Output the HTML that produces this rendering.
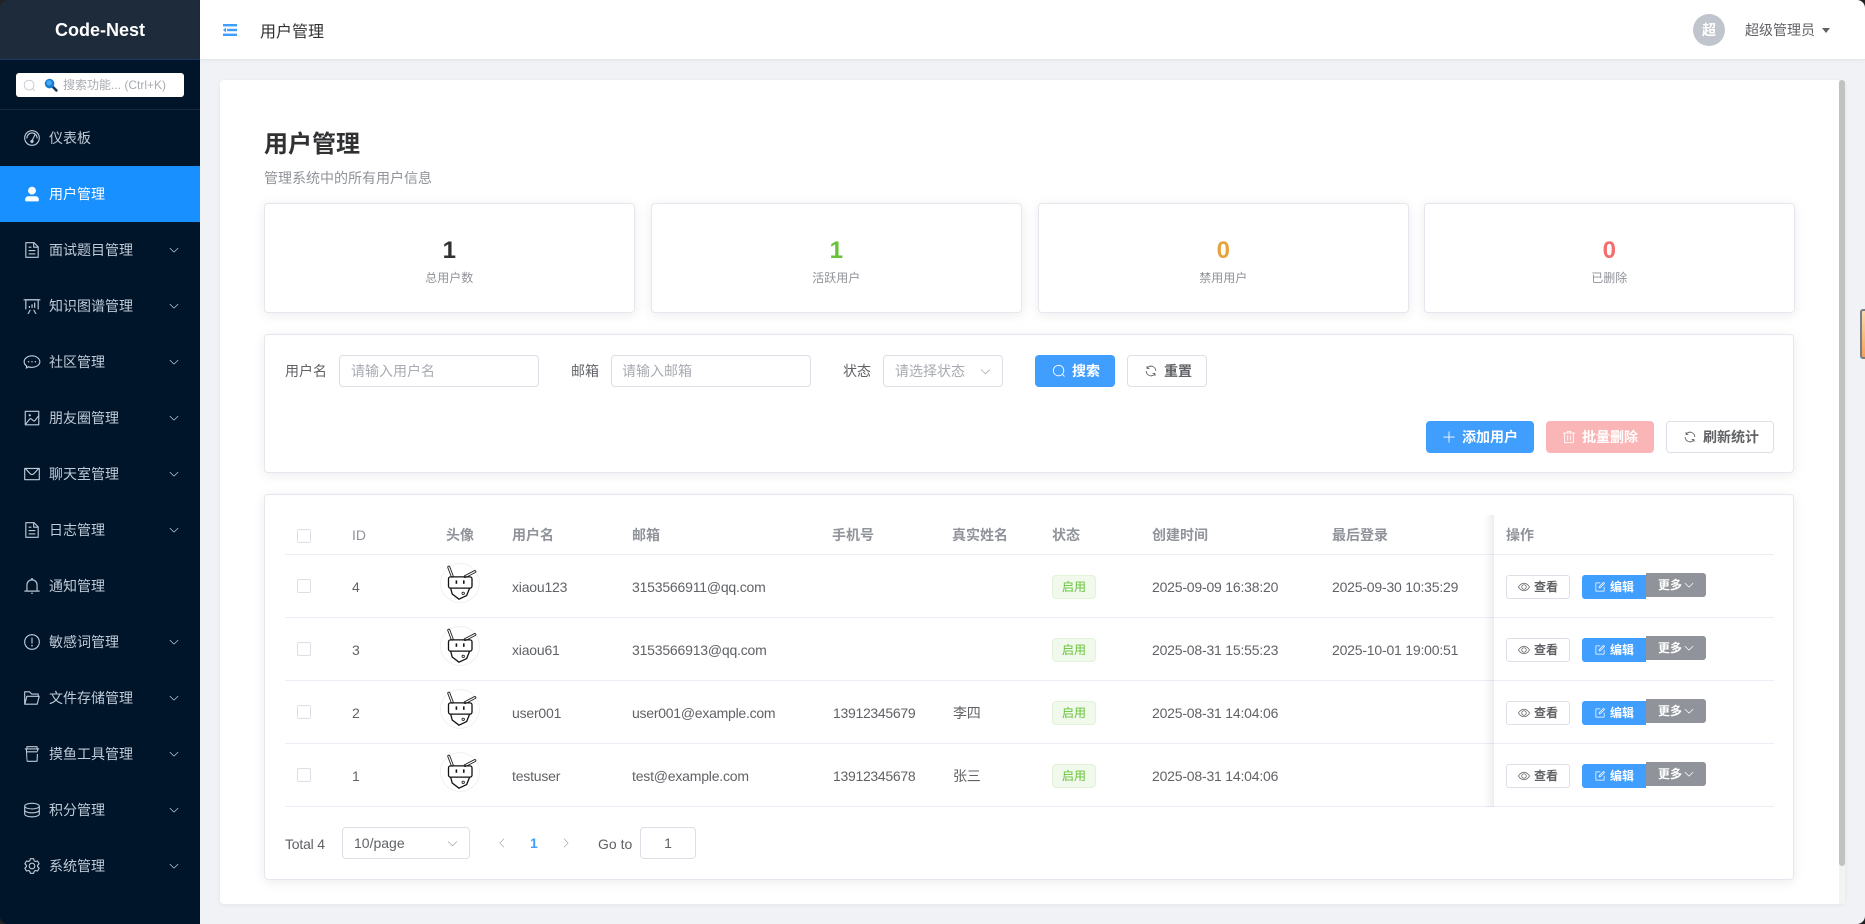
<!DOCTYPE html>
<html lang="zh-CN"><head><meta charset="utf-8"><title>用户管理</title>
<style>
*{box-sizing:border-box;margin:0;padding:0}
html,body{width:1865px;height:924px;overflow:hidden;background:#f0f2f5;font-family:"Liberation Sans","Noto Sans CJK SC",sans-serif;color:#606266;font-size:14px}
.a,.t,svg.i{position:absolute}
.t{white-space:nowrap;line-height:20px;height:20px}
svg.i{fill:currentColor;display:block}
#side{left:0;top:0;width:200px;height:924px;background:#001529}
#logo{left:0;top:0;width:200px;height:60px;background:#1d2b3a;border-bottom:1px solid #1c3a66;color:#fff;font-size:18px;font-weight:700;text-align:center;line-height:61px}
.m{position:absolute;left:0;width:200px;height:56px;color:#bfcbd9}
.m .t{left:49px;top:18px}
.m svg.ic{left:23px;top:19px;width:18px;height:18px}
.m svg.ch{left:168px;top:22px;width:12px;height:12px}
.on{background:#1890ff;color:#fff}
.card{position:absolute;background:#fff;border:1px solid #e4e7ed;border-radius:4px;box-shadow:0 2px 12px rgba(0,0,0,.08)}
.stat{top:203px;width:370.5px;height:110px;text-align:center}
.stat b{position:absolute;left:0;right:0;top:31px;font-size:24px;line-height:32px}
.stat span{position:absolute;left:0;right:0;top:64px;font-size:12px;line-height:20px;color:#909399}
.inp{position:absolute;top:355px;height:32px;border:1px solid #dcdfe6;border-radius:4px;background:#fff}
.ph{position:absolute;left:11px;top:5px;line-height:20px;color:#a8abb2;white-space:nowrap}
.btn{position:absolute;height:32px;border-radius:4px;line-height:30px;font-weight:700;white-space:nowrap}
.btn .t{top:6px;line-height:20px}
.pri{background:#409eff;color:#fff}
.dan{background:#fab6b6;color:#fff}
.pl{background:#fff;border:1px solid #dcdfe6;color:#606266}
.line{position:absolute;left:285px;width:1489px;height:1px;background:#ebeef5}
.th{top:525px;font-weight:700;color:#909399}
.cb{position:absolute;left:297px;width:14px;height:14px;border:1px solid #dcdfe6;border-radius:2px;background:#fff}
.row{position:absolute;left:0;width:1865px;height:62px}
.row .t{top:22px;letter-spacing:-.2px}
.av{position:absolute;left:440px;top:8px;width:40px;height:40px;border-radius:50%;background:#fff;border:1px solid #f1f1f1}
.av svg{position:absolute;left:-1px;top:-1px;width:40px;height:40px}
.tag{position:absolute;left:1052px;top:20px;width:44px;height:24px;line-height:22px;text-align:center;font-size:12px;color:#67c23a;background:#f0f9eb;border:1px solid #e1f3d8;border-radius:4px}
.view,.edit,.more{position:absolute;font-size:12px;white-space:nowrap;font-weight:700}
.view{left:1506px;top:20px;width:64px;height:24px;background:#fff;border:1px solid #dcdfe6;border-radius:3px;color:#606266}
.edit{left:1582px;top:20px;width:64px;height:24px;background:#409eff;color:#fff;border-radius:3px 0 0 3px}
.more{left:1646px;top:18px;width:60px;height:24px;background:#909399;color:#fff;border-radius:0 3px 3px 0}
.row .view .t{top:1px}
.row .edit .t,.row .more .t{top:2px;height:20px;letter-spacing:0}
.row .view .t{letter-spacing:0}
.row .ph{letter-spacing:-.3px}
</style></head><body>
<svg width="0" height="0" style="position:absolute"><defs>
<symbol id="search" viewBox="0 0 1024 1024"><path d="m795.904 750.72 124.992 124.928a32 32 0 0 1-45.248 45.248L750.656 795.904a416 416 0 1 1 45.248-45.248zM480 832a352 352 0 1 0 0-704 352 352 0 0 0 0 704z"/></symbol>
<symbol id="down" viewBox="0 0 1024 1024"><path d="M831.872 340.864 512 652.672 192.128 340.864a30.592 30.592 0 0 0-42.752 0 29.12 29.12 0 0 0 0 41.6L489.664 714.24a32 32 0 0 0 44.672 0l340.288-331.712a29.12 29.12 0 0 0 0-41.728 30.592 30.592 0 0 0-42.752 0z"/></symbol>
<symbol id="plus" viewBox="0 0 1024 1024"><path d="M480 480V128a32 32 0 0 1 64 0v352h352a32 32 0 1 1 0 64H544v352a32 32 0 1 1-64 0V544H128a32 32 0 0 1 0-64h352z"/></symbol>
<symbol id="del" viewBox="0 0 1024 1024"><path d="M160 256H96a32 32 0 0 1 0-64h256V95.936a32 32 0 0 1 32-32h256a32 32 0 0 1 32 32V192h256a32 32 0 1 1 0 64h-64v672a32 32 0 0 1-32 32H192a32 32 0 0 1-32-32V256zm448-64v-64H416v64h192zM224 896h576V256H224v640zm192-128a32 32 0 0 1-32-32V416a32 32 0 0 1 64 0v320a32 32 0 0 1-32 32zm192 0a32 32 0 0 1-32-32V416a32 32 0 0 1 64 0v320a32 32 0 0 1-32 32z"/></symbol>
<symbol id="refresh" viewBox="0 0 1024 1024"><path d="M771.776 794.88A384 384 0 0 1 128 512h64a320 320 0 0 0 555.712 216.448H654.72a32 32 0 1 1 0-64h149.056a32 32 0 0 1 32 32v148.928a32 32 0 1 1-64 0v-50.56zM276.288 295.616h92.992a32 32 0 0 1 0 64H220.16a32 32 0 0 1-32-32V178.56a32 32 0 0 1 64 0v50.56A384 384 0 0 1 896.128 512h-64a320 320 0 0 0-555.776-216.384z"/></symbol>
<symbol id="view" viewBox="0 0 1024 1024"><path d="M512 160c320 0 512 352 512 352S832 864 512 864 0 512 0 512s192-352 512-352zm0 64c-225.28 0-384.128 208.064-436.8 288 52.608 79.872 211.456 288 436.8 288 225.28 0 384.128-208.064 436.8-288-52.608-79.872-211.456-288-436.8-288zm0 64a224 224 0 1 1 0 448 224 224 0 0 1 0-448zm0 64a160.192 160.192 0 0 0-160 160c0 88.192 71.744 160 160 160s160-71.808 160-160-71.744-160-160-160z"/></symbol>
<symbol id="edit" viewBox="0 0 1024 1024"><path d="M832 512a32 32 0 1 1 64 0v352a32 32 0 0 1-32 32H160a32 32 0 0 1-32-32V160a32 32 0 0 1 32-32h352a32 32 0 0 1 0 64H192v640h640V512z"/><path d="m469.952 554.24 52.8-7.552L847.104 222.4a32 32 0 1 0-45.248-45.248L477.44 501.44l-7.552 52.8zm422.4-422.4a96 96 0 0 1 0 135.808l-331.84 331.84a32 32 0 0 1-18.112 9.088L436.8 623.68a32 32 0 0 1-36.224-36.224l15.104-105.6a32 32 0 0 1 9.024-18.112l331.904-331.84a96 96 0 0 1 135.744 0z"/></symbol>
<symbol id="odo" viewBox="0 0 1024 1024"><path d="M512 896a384 384 0 1 0 0-768 384 384 0 0 0 0 768zm0 64a448 448 0 1 1 0-896 448 448 0 0 1 0 896z"/><path d="M192 512a320 320 0 1 1 640 0 32 32 0 1 1-64 0 256 256 0 1 0-512 0 32 32 0 0 1-64 0z"/><path d="M570 628a96 96 0 1 1-61-20l152-320a32 32 0 1 1 58 27L570 628z"/></symbol>
<symbol id="user" viewBox="0 0 1024 1024"><path d="M288 320a224 224 0 1 0 448 0 224 224 0 1 0-448 0zm544 608H160a32 32 0 0 1-32-32v-96a160 160 0 0 1 160-160h448a160 160 0 0 1 160 160v96a32 32 0 0 1-32 32z"/></symbol>
<symbol id="doc" viewBox="0 0 1024 1024"><path d="M832 384H576V128H192v768h640V384zm-26.496-64L640 154.496V320h165.504zM160 64h480l256 256v608a32 32 0 0 1-32 32H160a32 32 0 0 1-32-32V96a32 32 0 0 1 32-32zm160 448h384v64H320v-64zm0-192h160v64H320v-64zm0 384h384v64H320v-64z"/></symbol>
<symbol id="board" viewBox="0 0 1024 1024"><path d="M32 128h960v64H32z"/><path d="M192 192v512h640V192H192zm-64-64h768v576H128V128z"/><path d="M322.176 960H248.32l144.64-250.56 55.424 32L322.176 960zm453.888 0h-73.856L576 741.44l55.424-32L776.064 960z"/><path d="M330 510h70v110h-70zM480 420h70v200h-70zM630 320h70v300h-70z"/></symbol>
<symbol id="chat" viewBox="0 0 1024 1024"><path d="M512 128C268 128 32 280 32 500c0 110 56 200 142 262l-22 142 170-82c58 18 124 28 190 28 244 0 480-150 480-350S756 128 512 128zm0 64c216 0 416 136 416 308S728 786 512 786c-62 0-122-10-176-30l-24-8-84 40 10-70-26-18c-76-52-116-124-116-200 0-172 200-308 416-308z"/><circle cx="320" cy="500" r="42"/><circle cx="512" cy="500" r="42"/><circle cx="704" cy="500" r="42"/></symbol>
<symbol id="pic" viewBox="0 0 1024 1024"><path d="M160 160v704h704V160H160zm-32-64h768a32 32 0 0 1 32 32v768a32 32 0 0 1-32 32H128a32 32 0 0 1-32-32V128a32 32 0 0 1 32-32z"/><path d="M384 288q64 0 64 64t-64 64q-64 0-64-64t64-64zM185.408 876.992l-50.816-38.912L350.72 556.032a96 96 0 0 1 134.592-17.856l1.856 1.472 122.88 99.136a32 32 0 0 0 44.992-4.864l216-269.888 49.92 39.936-215.808 269.824-.256.32a96 96 0 0 1-135.04 14.464l-122.88-99.072-.64-.512a32 32 0 0 0-44.8 5.952L185.408 876.992z"/></symbol>
<symbol id="msg" viewBox="0 0 1024 1024"><path d="M128 224v576h768V224H128zm-32-64h832a32 32 0 0 1 32 32v640a32 32 0 0 1-32 32H96a32 32 0 0 1-32-32V192a32 32 0 0 1 32-32z"/><path d="M904 224 656.512 506.88a192 192 0 0 1-289.024 0L120 224h784zm-698.944 0 210.56 240.704a128 128 0 0 0 192.704 0L818.944 224H205.056z"/></symbol>
<symbol id="bell" viewBox="0 0 1024 1024"><path d="M512 64a64 64 0 0 1 64 64v64H448v-64a64 64 0 0 1 64-64z"/><path d="M256 768h512V448a256 256 0 1 0-512 0v320zm256-640a320 320 0 0 1 320 320v384H192V448a320 320 0 0 1 320-320z"/><path d="M96 768h832q32 0 32 32t-32 32H96q-32 0-32-32t32-32zm352 128h128a64 64 0 0 1-128 0z"/></symbol>
<symbol id="warn" viewBox="0 0 1024 1024"><path d="M512 64a448 448 0 1 1 0 896 448 448 0 0 1 0-896zm0 832a384 384 0 0 0 0-768 384 384 0 0 0 0 768zm48-176a48 48 0 1 1-96 0 48 48 0 0 1 96 0zm-48-464a32 32 0 0 1 32 32v288a32 32 0 0 1-64 0V288a32 32 0 0 1 32-32z"/></symbol>
<symbol id="folder" viewBox="0 0 1024 1024"><path d="M878.08 448H241.92l-96 384h636.16l96-384zM832 384v-64H485.76L357.504 192H128v448l57.92-231.744A32 32 0 0 1 216.96 384H832zm-26.88 512H96a32 32 0 0 1-32-32V160a32 32 0 0 1 32-32h288l128 128h352a32 32 0 0 1 32 32v96h23.04a32 32 0 0 1 31.04 39.744l-112 448A32 32 0 0 1 805.12 896z"/></symbol>
<symbol id="cup" viewBox="0 0 1024 1024"><path d="M224 64h576a32 32 0 0 1 32 32v96h64a32 32 0 0 1 0 64h-32v96h-64v-96H224l30 640h516l18-384h64l-22 416a64 64 0 0 1-64 32H272a64 64 0 0 1-64-32l-48-672h-32a32 32 0 0 1 0-64h64V96a32 32 0 0 1 32-32zm32 64v64h512v-64H256zM200 352h624v64H200z"/></symbol>
<symbol id="coin" viewBox="0 0 1024 1024"><path d="M512 96C296 96 64 160 64 288v448c0 128 232 192 448 192s448-64 448-192V288C960 160 728 96 512 96zm0 64c204 0 384 60 384 128s-180 128-384 128-384-60-384-128 180-128 384-128zM128 392c76 54 240 88 384 88s308-34 384-88v120c0 68-180 128-384 128s-384-60-384-128V392zm0 224c76 54 240 88 384 88s308-34 384-88v120c0 68-180 128-384 128S128 804 128 736V616z"/></symbol>
<symbol id="gear" viewBox="0 0 1024 1024"><path d="M600.704 64a32 32 0 0 1 30.464 22.208l35.2 109.376c14.784 7.232 28.928 15.36 42.432 24.512l112.384-24.192a32 32 0 0 1 34.432 15.36L944.32 364.8a32 32 0 0 1-4.032 37.504l-77.12 85.12a357.12 357.12 0 0 1 0 49.024l77.12 85.248a32 32 0 0 1 4.032 37.504l-88.704 153.6a32 32 0 0 1-34.432 15.296L708.8 803.904c-13.44 9.088-27.648 17.28-42.368 24.512l-35.264 109.376A32 32 0 0 1 600.704 960H423.296a32 32 0 0 1-30.464-22.208L357.696 828.48a351.616 351.616 0 0 1-42.56-24.64l-112.32 24.256a32 32 0 0 1-34.432-15.36L79.68 659.2a32 32 0 0 1 4.032-37.504l77.12-85.248a357.12 357.12 0 0 1 0-48.896l-77.12-85.248A32 32 0 0 1 79.68 364.8l88.704-153.6a32 32 0 0 1 34.432-15.296l112.32 24.256c13.568-9.152 27.776-17.408 42.56-24.64l35.2-109.312A32 32 0 0 1 423.232 64H600.64zm-23.424 64H446.72l-36.352 113.088-24.512 11.968a294.113 294.113 0 0 0-34.816 20.096l-22.656 15.36-116.224-25.088-65.28 113.152 79.68 88.192-1.92 27.136a293.12 293.12 0 0 0 0 40.192l1.92 27.136-79.808 88.192 65.344 113.152 116.224-25.024 22.656 15.296a294.113 294.113 0 0 0 34.816 20.096l24.512 11.968L446.72 896h130.688l36.48-113.152 24.448-11.904a288.282 288.282 0 0 0 34.752-20.096l22.592-15.296 116.288 25.024 65.28-113.152-79.744-88.192 1.92-27.136a293.12 293.12 0 0 0 0-40.256l-1.92-27.136 79.808-88.128-65.344-113.152-116.288 24.96-22.592-15.232a287.616 287.616 0 0 0-34.752-20.096l-24.448-11.904L577.344 128zM512 320a192 192 0 1 1 0 384 192 192 0 0 1 0-384zm0 64a128 128 0 1 0 0 256 128 128 0 0 0 0-256z"/></symbol>
<symbol id="bot" viewBox="0 0 40 40"><g fill="none" stroke-linecap="round"><path d="M8.8 4.200 12.200 13.200M34.800 8.600 25.200 13.600" stroke="#222" stroke-width="3"/><path d="M8.800 4.200 12.200 13.200M34.800 8.600 25.200 13.600" stroke="#fff" stroke-width="1.200"/></g><g fill="none" stroke="#111" stroke-width="1.300" stroke-linejoin="round"><rect x="8.500" y="13.900" width="23.500" height="11.200" rx="2"/><path d="M10.700 25.300 12.200 31 19 36.200 26.600 32.600 29.600 25.300"/><circle cx="23.200" cy="30.300" r="1.200" stroke-width=".8"/></g><rect x="15.600" y="17.400" width="1.600" height="3.400" fill="#111"/><rect x="23" y="17.400" width="1.600" height="3.400" fill="#111"/></symbol>
</defs></svg>

<!-- Sidebar -->
<div id="side" class="a">
  <div id="logo" class="a">Code-Nest</div>
  <div class="a" style="left:16px;top:73px;width:168px;height:24px;background:#fff;border-radius:3px"></div>
  <svg class="i" style="left:23px;top:79px;width:13px;height:13px;color:#c0c4cc"><use href="#search"/></svg>
  <svg class="a" style="left:44px;top:78px;width:14px;height:14px" viewBox="0 0 14 14"><path d="M8.500 8.500 12.400 12.400" stroke="#1c3b5a" stroke-width="2.600" stroke-linecap="round"/><circle cx="5.600" cy="5.600" r="4.800" fill="#1a7fd4"/><circle cx="5.200" cy="4.800" r="2.600" fill="#49a8ee"/></svg>
  <div class="t" style="left:63px;top:75px;font-size:12px;color:#a8abb2">搜索功能... (Ctrl+K)</div>
  <div class="a" style="left:0;top:109px;width:200px;height:1px;background:#16283c"></div>

  <div class="m" style="top:110px"><svg class="i ic"><use href="#odo"/></svg><div class="t">仪表板</div></div>
  <div class="m on" style="top:166px"><svg class="i ic"><use href="#user"/></svg><div class="t">用户管理</div></div>
  <div class="m" style="top:222px"><svg class="i ic"><use href="#doc"/></svg><div class="t">面试题目管理</div><svg class="i ch"><use href="#down"/></svg></div>
  <div class="m" style="top:278px"><svg class="i ic"><use href="#board"/></svg><div class="t">知识图谱管理</div><svg class="i ch"><use href="#down"/></svg></div>
  <div class="m" style="top:334px"><svg class="i ic"><use href="#chat"/></svg><div class="t">社区管理</div><svg class="i ch"><use href="#down"/></svg></div>
  <div class="m" style="top:390px"><svg class="i ic"><use href="#pic"/></svg><div class="t">朋友圈管理</div><svg class="i ch"><use href="#down"/></svg></div>
  <div class="m" style="top:446px"><svg class="i ic"><use href="#msg"/></svg><div class="t">聊天室管理</div><svg class="i ch"><use href="#down"/></svg></div>
  <div class="m" style="top:502px"><svg class="i ic"><use href="#doc"/></svg><div class="t">日志管理</div><svg class="i ch"><use href="#down"/></svg></div>
  <div class="m" style="top:558px"><svg class="i ic"><use href="#bell"/></svg><div class="t">通知管理</div></div>
  <div class="m" style="top:614px"><svg class="i ic"><use href="#warn"/></svg><div class="t">敏感词管理</div><svg class="i ch"><use href="#down"/></svg></div>
  <div class="m" style="top:670px"><svg class="i ic"><use href="#folder"/></svg><div class="t">文件存储管理</div><svg class="i ch"><use href="#down"/></svg></div>
  <div class="m" style="top:726px"><svg class="i ic"><use href="#cup"/></svg><div class="t">摸鱼工具管理</div><svg class="i ch"><use href="#down"/></svg></div>
  <div class="m" style="top:782px"><svg class="i ic"><use href="#coin"/></svg><div class="t">积分管理</div><svg class="i ch"><use href="#down"/></svg></div>
  <div class="m" style="top:838px"><svg class="i ic"><use href="#gear"/></svg><div class="t">系统管理</div><svg class="i ch"><use href="#down"/></svg></div>
</div>

<!-- Top bar -->
<div class="a" style="left:200px;top:0;width:1665px;height:60px;background:#fff;border-bottom:1px solid #e6e8ec;box-shadow:0 1px 4px rgba(0,21,41,.04)"></div>
<svg class="a" style="left:223px;top:24px;width:14px;height:12px" viewBox="0 0 14 12"><g fill="#409eff"><rect x="0" y="0" width="14" height="2.400"/><rect x="4" y="4.800" width="10" height="2.400"/><rect x="0" y="9.600" width="14" height="2.400"/><path d="M3 3.500V8.500L0 6z"/></g></svg>
<div class="t" style="left:260px;top:22px;height:22px;line-height:22px;font-size:16px;color:#303133">用户管理</div>
<div class="a" style="left:1693px;top:14px;width:32px;height:32px;border-radius:50%;background:#c0c4cc;color:#fff;text-align:center;line-height:32px;font-size:14px;font-weight:700">超</div>
<div class="t" style="left:1745px;top:20px;color:#606266">超级管理员</div>
<div class="a" style="left:1822px;top:28px;width:0;height:0;border-left:4.500px solid transparent;border-right:4.500px solid transparent;border-top:5px solid #606266"></div>

<!-- Main card -->
<div class="a" style="left:220px;top:80px;width:1625px;height:824px;background:#fff;border-radius:4px;box-shadow:0 1px 4px rgba(0,0,0,.06)"></div>
<div class="a" style="left:1839px;top:80px;width:6px;height:824px;background:#f3f3f3"></div>
<div class="a" style="left:1839px;top:80px;width:6px;height:786px;background:#c1c1c1;border-radius:3px"></div>

<div class="t" style="left:264px;top:128px;height:34px;line-height:34px;font-size:24px;font-weight:700;color:#303133">用户管理</div>
<div class="t" style="left:264px;top:168px;color:#909399">管理系统中的所有用户信息</div>

<!-- Stats -->
<div class="card stat" style="left:264px"><b style="color:#303133">1</b><span>总用户数</span></div>
<div class="card stat" style="left:651px"><b style="color:#67c23a">1</b><span>活跃用户</span></div>
<div class="card stat" style="left:1038px"><b style="color:#e6a23c">0</b><span>禁用用户</span></div>
<div class="card stat" style="left:1424px"><b style="color:#f56c6c">0</b><span>已删除</span></div>

<!-- Filter card -->
<div class="card" style="left:264px;top:334px;width:1530px;height:139px"></div>
<div class="t" style="left:285px;top:361px">用户名</div>
<div class="inp" style="left:339px;width:200px"><div class="ph">请输入用户名</div></div>
<div class="t" style="left:571px;top:361px">邮箱</div>
<div class="inp" style="left:611px;width:200px"><div class="ph" style="left:10px">请输入邮箱</div></div>
<div class="t" style="left:843px;top:361px">状态</div>
<div class="inp" style="left:883px;width:120px"><div class="ph">请选择状态</div><svg class="i" style="left:95px;top:9px;width:13px;height:13px;color:#a8abb2"><use href="#down"/></svg></div>
<div class="btn pri" style="left:1035px;top:355px;width:80px"><svg class="i" style="left:17px;top:9px;width:14px;height:14px"><use href="#search"/></svg><div class="t" style="left:37px">搜索</div></div>
<div class="btn pl" style="left:1127px;top:355px;width:80px"><svg class="i" style="left:16px;top:8px;width:14px;height:14px"><use href="#refresh"/></svg><div class="t" style="left:36px;top:5px">重置</div></div>
<div class="btn pri" style="left:1426px;top:421px;width:108px"><svg class="i" style="left:16px;top:9px;width:14px;height:14px"><use href="#plus"/></svg><div class="t" style="left:36px">添加用户</div></div>
<div class="btn dan" style="left:1546px;top:421px;width:108px"><svg class="i" style="left:16px;top:9px;width:14px;height:14px"><use href="#del"/></svg><div class="t" style="left:36px">批量删除</div></div>
<div class="btn pl" style="left:1666px;top:421px;width:108px"><svg class="i" style="left:16px;top:8px;width:14px;height:14px"><use href="#refresh"/></svg><div class="t" style="left:36px;top:5px">刷新统计</div></div>

<!-- Table card -->
<div class="card" style="left:264px;top:494px;width:1530px;height:386px"></div>
<div class="cb" style="top:529px"></div>
<div class="t th" style="left:352px;font-weight:400">ID</div>
<div class="t th" style="left:446px">头像</div>
<div class="t th" style="left:512px">用户名</div>
<div class="t th" style="left:632px">邮箱</div>
<div class="t th" style="left:832px">手机号</div>
<div class="t th" style="left:952px">真实姓名</div>
<div class="t th" style="left:1052px">状态</div>
<div class="t th" style="left:1152px">创建时间</div>
<div class="t th" style="left:1332px">最后登录</div>
<div class="t th" style="left:1506px">操作</div>
<div class="line" style="top:554px"></div>
<div class="line" style="top:617px"></div>
<div class="line" style="top:680px"></div>
<div class="line" style="top:743px"></div>
<div class="line" style="top:806px"></div>
<div class="a" style="left:1484px;top:515px;width:10px;height:292px;background:linear-gradient(to right,rgba(0,0,0,0),rgba(0,0,0,.07))"></div>

<div class="row" style="top:555px">
  <div class="cb" style="top:24px"></div><div class="t" style="left:352px">4</div>
  <div class="av"><svg><use href="#bot"/></svg></div>
  <div class="t" style="left:512px">xiaou123</div><div class="t" style="left:632px">3153566911@qq.com</div>
  <div class="tag">启用</div>
  <div class="t" style="left:1152px">2025-09-09 16:38:20</div><div class="t" style="left:1332px">2025-09-30 10:35:29</div>
  <div class="view"><svg class="i" style="left:11px;top:5px;width:12px;height:12px"><use href="#view"/></svg><div class="t" style="left:27px">查看</div></div>
  <div class="edit"><svg class="i" style="left:12px;top:6px;width:12px;height:12px"><use href="#edit"/></svg><div class="t" style="left:28px">编辑</div></div>
  <div class="more"><div class="t" style="left:12px">更多</div><svg class="i" style="left:37px;top:6px;width:12px;height:12px"><use href="#down"/></svg></div>
</div>
<div class="row" style="top:618px">
  <div class="cb" style="top:24px"></div><div class="t" style="left:352px">3</div>
  <div class="av"><svg><use href="#bot"/></svg></div>
  <div class="t" style="left:512px">xiaou61</div><div class="t" style="left:632px">3153566913@qq.com</div>
  <div class="tag">启用</div>
  <div class="t" style="left:1152px">2025-08-31 15:55:23</div><div class="t" style="left:1332px">2025-10-01 19:00:51</div>
  <div class="view"><svg class="i" style="left:11px;top:5px;width:12px;height:12px"><use href="#view"/></svg><div class="t" style="left:27px">查看</div></div>
  <div class="edit"><svg class="i" style="left:12px;top:6px;width:12px;height:12px"><use href="#edit"/></svg><div class="t" style="left:28px">编辑</div></div>
  <div class="more"><div class="t" style="left:12px">更多</div><svg class="i" style="left:37px;top:6px;width:12px;height:12px"><use href="#down"/></svg></div>
</div>
<div class="row" style="top:681px">
  <div class="cb" style="top:24px"></div><div class="t" style="left:352px">2</div>
  <div class="av"><svg><use href="#bot"/></svg></div>
  <div class="t" style="left:512px">user001</div><div class="t" style="left:632px;letter-spacing:-.25px">user001@example.com</div>
  <div class="t" style="left:833px;letter-spacing:-.3px">13912345679</div><div class="t" style="left:953px">李四</div>
  <div class="tag">启用</div>
  <div class="t" style="left:1152px">2025-08-31 14:04:06</div>
  <div class="view"><svg class="i" style="left:11px;top:5px;width:12px;height:12px"><use href="#view"/></svg><div class="t" style="left:27px">查看</div></div>
  <div class="edit"><svg class="i" style="left:12px;top:6px;width:12px;height:12px"><use href="#edit"/></svg><div class="t" style="left:28px">编辑</div></div>
  <div class="more"><div class="t" style="left:12px">更多</div><svg class="i" style="left:37px;top:6px;width:12px;height:12px"><use href="#down"/></svg></div>
</div>
<div class="row" style="top:744px">
  <div class="cb" style="top:24px"></div><div class="t" style="left:352px">1</div>
  <div class="av"><svg><use href="#bot"/></svg></div>
  <div class="t" style="left:512px">testuser</div><div class="t" style="left:632px">test@example.com</div>
  <div class="t" style="left:833px;letter-spacing:-.3px">13912345678</div><div class="t" style="left:953px">张三</div>
  <div class="tag">启用</div>
  <div class="t" style="left:1152px">2025-08-31 14:04:06</div>
  <div class="view"><svg class="i" style="left:11px;top:5px;width:12px;height:12px"><use href="#view"/></svg><div class="t" style="left:27px">查看</div></div>
  <div class="edit"><svg class="i" style="left:12px;top:6px;width:12px;height:12px"><use href="#edit"/></svg><div class="t" style="left:28px">编辑</div></div>
  <div class="more"><div class="t" style="left:12px">更多</div><svg class="i" style="left:37px;top:6px;width:12px;height:12px"><use href="#down"/></svg></div>
</div>

<!-- Pagination -->
<div class="t" style="left:285px;top:834px;letter-spacing:-.2px">Total 4</div>
<div class="inp" style="left:342px;top:827px;width:128px"><div class="t" style="left:11px;top:5px;color:#606266">10/page</div><svg class="i" style="left:103px;top:9px;width:13px;height:13px;color:#a8abb2"><use href="#down"/></svg></div>
<svg class="i" style="left:496px;top:837px;width:12px;height:12px;color:#a8abb2;transform:rotate(90deg)"><use href="#down"/></svg>
<div class="t" style="left:530px;top:833px;font-weight:700;color:#409eff">1</div>
<svg class="i" style="left:560px;top:837px;width:12px;height:12px;color:#a8abb2;transform:rotate(-90deg)"><use href="#down"/></svg>
<div class="t" style="left:598px;top:834px">Go to</div>
<div class="inp" style="left:640px;top:827px;width:56px;text-align:center;line-height:30px">1</div>

<!-- Right edge widget -->
<div class="a" style="left:1860px;top:309px;width:8px;height:50px;border:2px solid #7a7d85;border-radius:3px;background:linear-gradient(#f8d9b0,#f5a45a)"></div>

<!-- Window corners -->
<svg class="a" style="left:0;top:0" width="8" height="8" viewBox="0 0 8 8"><path d="M0 0H8A8 8 0 0 0 0 8z" fill="#222"/></svg>
<svg class="a" style="left:1857px;top:0" width="8" height="8" viewBox="0 0 8 8"><path d="M8 0H0A8 8 0 0 1 8 8z" fill="#222"/></svg>
<svg class="a" style="left:0;top:916px" width="8" height="8" viewBox="0 0 8 8"><path d="M0 8H8A8 8 0 0 1 0 0z" fill="#222"/></svg>
<svg class="a" style="left:1857px;top:916px" width="8" height="8" viewBox="0 0 8 8"><path d="M8 8H0A8 8 0 0 0 8 0z" fill="#222"/></svg>
</body></html>
